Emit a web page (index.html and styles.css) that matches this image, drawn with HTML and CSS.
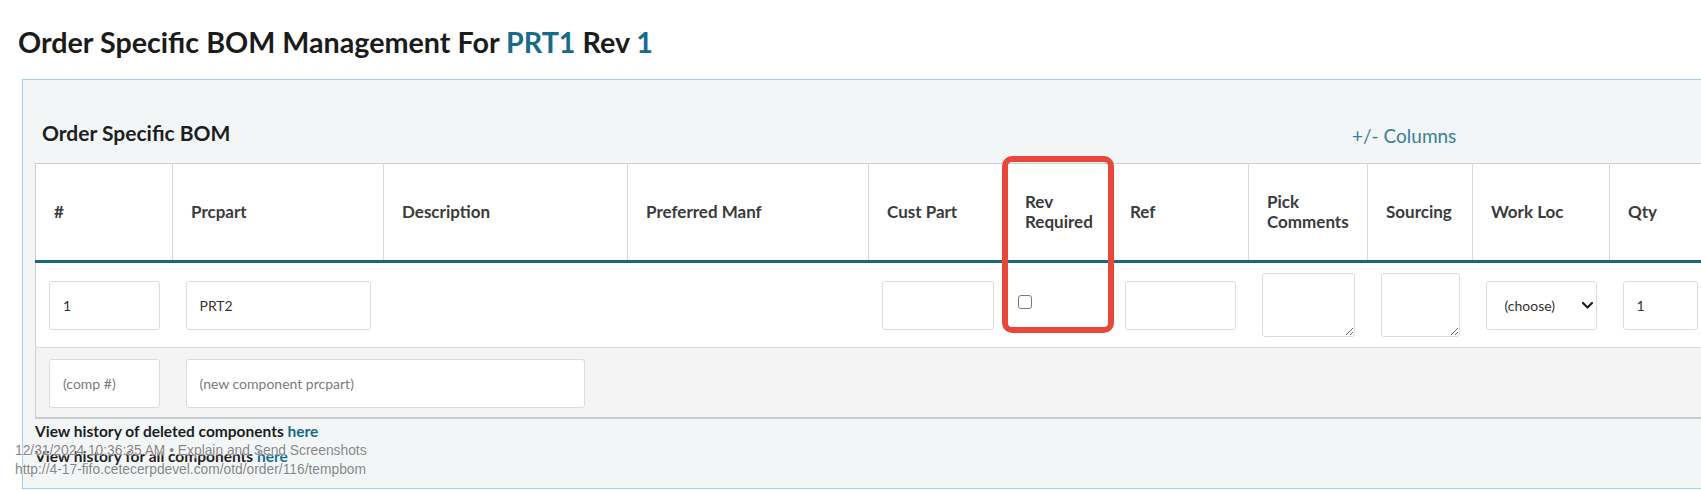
FILE: index.html
```html
<!DOCTYPE html>
<html lang="en">
<head>
  <meta charset="UTF-8">
  <meta name="viewport" content="width=device-width, initial-scale=1.0">
  <title>Order Specific BOM Management</title>
  <link rel="stylesheet" href="styles.css">
</head>
<body>
  <div class="page">
    <h1 class="page-title">Order Specific BOM Management For <a href="#">PRT1</a> Rev <a href="#">1</a></h1>

    <div class="panel">
      <div class="panel-head">
        <h2>Order Specific BOM</h2>
        <a class="cols-link" href="#">+/- Columns</a>
      </div>

      <div class="bom-wrap">
        <table class="bom">
          <colgroup>
            <col class="w137">
            <col class="w211">
            <col class="w244">
            <col class="w241">
            <col class="w138">
            <col class="w105">
            <col class="w137">
            <col class="w119">
            <col class="w105">
            <col class="w137">
            <col class="w102">
          </colgroup>
          <thead>
            <tr>
              <th>#</th>
              <th>Prcpart</th>
              <th>Description</th>
              <th>Preferred Manf</th>
              <th>Cust Part</th>
              <th>Rev Required</th>
              <th>Ref</th>
              <th>Pick Comments</th>
              <th>Sourcing</th>
              <th>Work Loc</th>
              <th>Qty</th>
            </tr>
          </thead>
          <tbody>
            <tr class="item-row">
              <td><input class="field" type="text" value="1"></td>
              <td><input class="field" type="text" value="PRT2"></td>
              <td></td>
              <td></td>
              <td><input class="field" type="text"></td>
              <td><input class="check" type="checkbox"></td>
              <td><input class="field" type="text"></td>
              <td><textarea class="field note"></textarea></td>
              <td><textarea class="field note"></textarea></td>
              <td>
                <span class="select-wrap">
                  <select class="field pick">
                    <option>(choose)</option>
                  </select>
                  <svg class="chev" viewBox="0 0 11 7" aria-hidden="true"><path d="M1 1l4.5 4.5L10 1" fill="none" stroke="#1e1e1e" stroke-width="2.2" stroke-linecap="round" stroke-linejoin="round"/></svg>
                </span>
              </td>
              <td><input class="field" type="text" value="1"></td>
            </tr>
            <tr class="add-row">
              <td><input class="field" type="text" placeholder="(comp #)"></td>
              <td colspan="2"><input class="field new-part" type="text" placeholder="(new component prcpart)"></td>
              <td colspan="8"></td>
            </tr>
          </tbody>
        </table>
        <div class="callout"></div>
      </div>

      <p class="history">View history of deleted components <a href="#">here</a></p>
      <p class="history">View history for all components <a href="#">here</a></p>
    </div>
  </div>

  <div class="stamp">
    <div>12/31/2024 10:36:35 AM • Explain and Send Screenshots</div>
    <div>http://4-17-fifo.cetecerpdevel.com/otd/order/116/tempbom</div>
  </div>
</body>
</html>
```

FILE: styles.css
```css
html,
body {
  margin: 0;
  overflow: hidden;
}

body {
  font-family: Lato, "Open Sans", sans-serif;
  color: #333;
  background-color: #fff;
}

.page {
  padding: 25px 0 0 18px;
}

.page-title {
  margin: 0;
  font-size: 28.7px;
  line-height: 34px;
  font-weight: 700;
  color: #1b1b1b;
}

.page-title a {
  color: #1a6a8c;
  text-decoration: none;
}

.panel {
  width: max-content;
  margin: 20px 0 0 4px;
  padding: 40px 12px 20px;
  border: 1px solid #a6d2e0;
  background-color: #f2f6f7;
}

.panel-head {
  display: grid;
  grid-template-columns: 1310px auto;
  align-items: start;
  padding-left: 7px;
  margin-bottom: 14px;
}

.panel-head h2 {
  margin: 0;
  font-size: 21px;
  line-height: 26px;
  font-weight: 700;
  color: #1e1e1e;
}

.cols-link {
  margin-top: 3px;
  font-size: 19px;
  line-height: 26px;
  color: #3a7e99;
  text-decoration: none;
}

.bom-wrap {
  position: relative;
}

.bom {
  table-layout: fixed;
  width: 1676px;
  border-collapse: collapse;
  border: 1px solid #cfcfcf;
}

.w102 { width: 102px; }
.w105 { width: 105px; }
.w119 { width: 119px; }
.w137 { width: 137px; }
.w138 { width: 138px; }
.w211 { width: 211px; }
.w241 { width: 241px; }
.w244 { width: 244px; }

.bom th {
  height: 96px;
  padding: 0 10px 0 18px;
  border-right: 1px solid #d8d8d8;
  border-bottom: 3px solid #1c6384;
  background-color: #fff;
  text-align: left;
  vertical-align: middle;
  font-size: 17px;
  line-height: 20px;
  font-weight: 700;
  color: #3b3b3b;
}

.bom td {
  padding: 10px 13px;
  vertical-align: middle;
}

.item-row td {
  background-color: #fff;
  border-bottom: 1px solid #dcdcdc;
}

.add-row td {
  padding: 11px 13px 9px;
  background-color: #f4f4f4;
  border-bottom: 2px solid #cbcbcb;
}

.field {
  box-sizing: border-box;
  display: block;
  width: 100%;
  height: 49px;
  margin: 0;
  padding: 0 13px;
  border: 1px solid #dcdcdc;
  border-radius: 3px;
  background-color: #fff;
  font-family: Lato, "Open Sans", sans-serif;
  font-size: 14px;
  color: #333;
}

.field::placeholder {
  color: #7b7b7b;
}

.note {
  height: 64px;
  padding: 8px 10px;
}

.new-part {
  width: 399px;
}

.check {
  appearance: none;
  display: block;
  width: 14px;
  height: 14px;
  margin: 0 0 6px -2px;
  border: 1px solid #7a7a7a;
  border-radius: 3px;
  background-color: #fff;
}

.select-wrap {
  position: relative;
  display: block;
}

.pick {
  appearance: none;
  padding-left: 18px;
}

.chev {
  position: absolute;
  right: 4px;
  top: 50%;
  width: 11px;
  height: 7px;
  margin-top: -3px;
  pointer-events: none;
}

.callout {
  position: absolute;
  left: 967px;
  top: -7px;
  width: 112px;
  height: 177px;
  box-sizing: border-box;
  border: 6px solid #e9463c;
  border-radius: 10px;
}

.history {
  margin: 0;
  font-size: 15.5px;
  line-height: 24.5px;
  font-weight: 700;
  color: #1e1e1e;
}

.history a {
  color: #1a6a8c;
  text-decoration: none;
}

.stamp {
  position: absolute;
  left: 15px;
  top: 441px;
  font-family: "Liberation Sans", Arial, sans-serif;
  font-size: 13.8px;
  line-height: 19px;
  color: #858585;
  white-space: nowrap;
  text-shadow: 0 0 1px #fff, 0 0 1px #fff, 0 0 2px #fff;
}
```
